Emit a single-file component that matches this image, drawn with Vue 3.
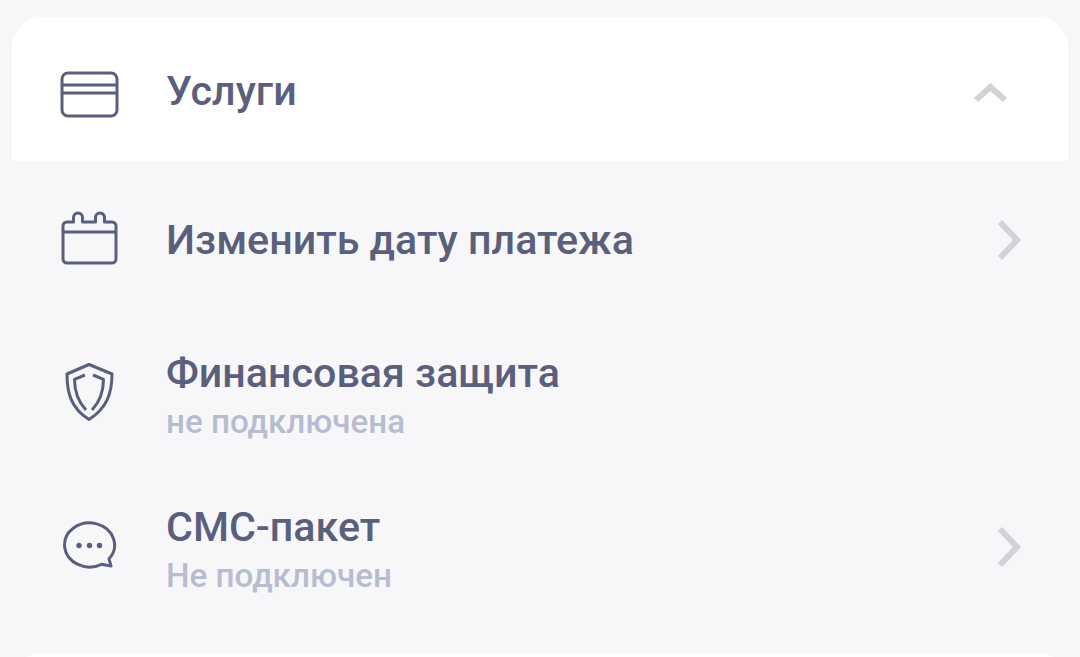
<script setup>
const rows = [
  { id: "date", title: "Изменить дату платежа", arrow: true },
  { id: "shield", title: "Финансовая защита", sub: "не подключена", arrow: false },
  { id: "sms", title: "СМС-пакет", sub: "Не подключен", arrow: true },
];
</script>

<template>
  <div class="page">
    <div class="head">
      <svg class="icon" width="60" height="60" viewBox="0 0 60 60" fill="none">
        <rect x="3" y="12" width="55" height="43" rx="6" />
        <path d="M3 24h55M3 32h55" />
      </svg>
      <span class="title">Услуги</span>
      <svg class="chevron-up" width="36" height="22" viewBox="0 0 36 22" fill="none">
        <path d="M4 20L18.500 7 33 20" />
      </svg>
    </div>

    <div v-for="row in rows" :key="row.id" class="row" :class="row.id">
      <svg class="icon" width="60" height="60" viewBox="0 0 60 60" fill="none">
        <template v-if="row.id === 'date'">
          <path d="M8 12h6.500V7.500a4.500 4.500 0 0 1 9 0V12h13V7.500a4.500 4.500 0 0 1 9 0V12H53a4 4 0 0 1 4 4v33a4 4 0 0 1-4 4H8a4 4 0 0 1-4-4V16a4 4 0 0 1 4-4z" />
          <path d="M4 22h53" />
        </template>
        <template v-else-if="row.id === 'shield'">
          <path d="M30 1.500l23 9.500C53 30 48 45 30 56.500 12 45 8 30 8 11z" />
          <path d="M26 12l-10.500 4.300c0 12 4 22.700 11.500 30.700M34 12l10.500 4.300c0 12-4 22.700-11.500 30.700" />
        </template>
        <template v-else>
          <path d="M42.500 47.300A25 22 0 1 1 50 41.800L52 49z" />
          <circle class="dot" cx="20" cy="28.500" r="2.700" />
          <circle class="dot" cx="30.500" cy="28.500" r="2.700" />
          <circle class="dot" cx="40.500" cy="28.500" r="2.700" />
        </template>
      </svg>
      <div class="text" :class="{ 'has-sub': row.sub }">
        <div class="title">{{ row.title }}</div>
        <div v-if="row.sub" class="sub">{{ row.sub }}</div>
      </div>
      <svg v-if="row.arrow" class="chevron-right" width="26" height="42" viewBox="0 0 26 42" fill="none">
        <path d="M4 3l17 18L4 39" />
      </svg>
    </div>

    <div class="next"></div>
  </div>
</template>

<style>
html,
body {
  margin: 0;
  background: #f7f7f9;
}
</style>

<style scoped>
.page {
  height: 657px;
  overflow: hidden;
  padding: 17px 12px 0;
  box-sizing: border-box;
  background: #f7f7f9;
  font-family: Roboto, "Noto Sans", sans-serif;
}

.head {
  display: flex;
  align-items: center;
  height: 144px;
  padding: 4px 60px 0 47px;
  background: #fff;
  border-radius: 30px 30px 0 0;
  box-sizing: border-box;
}

.row {
  display: flex;
  align-items: center;
  padding: 0 46px 0 47px;
}

.row.date {
  height: 158px;
}

.row.shield {
  height: 148px;
}

.row.sms {
  height: 160px;
}

.icon {
  flex: none;
  margin-right: 47px;
  stroke: #595f7d;
  stroke-width: 3;
  stroke-linejoin: round;
}

.dot {
  fill: #595f7d;
  stroke: none;
}

.text {
  flex: 1;
}

.has-sub {
  padding-top: 6px;
}

.title {
  flex: 1;
  font-size: 41.200px;
  line-height: 46px;
  font-weight: 500;
  color: #5a607c;
}

.sub {
  margin-top: 6px;
  font-size: 33.200px;
  line-height: 40px;
  font-weight: 500;
  color: #b7bdd1;
}

.chevron-up,
.chevron-right {
  flex: none;
  stroke: #d2d2d8;
  stroke-width: 6;
}

.next {
  height: 30px;
  margin-top: 26px;
  background: #fff;
  border-radius: 30px 30px 0 0;
}
</style>
